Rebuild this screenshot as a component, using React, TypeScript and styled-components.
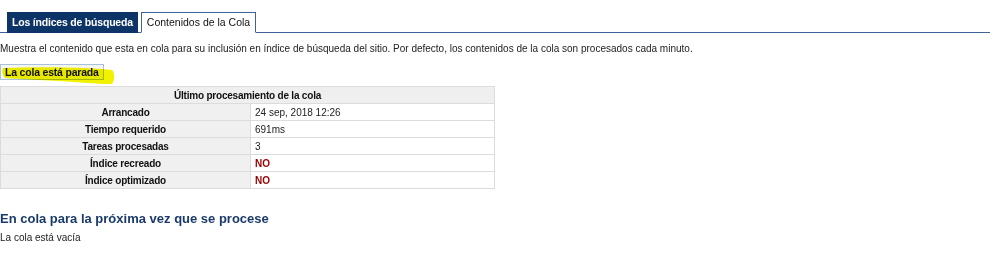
import styled, { createGlobalStyle } from 'styled-components';

const GlobalStyle = createGlobalStyle`
  body {
    margin: 0;
    background: #fff;
    font-family: "Liberation Sans", Arial, sans-serif;
    font-size: 10px;
    color: #222;
  }
`;

type Row = { label: string; value: string; alert?: boolean };

const rows: Row[] = [
  { label: 'Arrancado', value: '24 sep, 2018 12:26' },
  { label: 'Tiempo requerido', value: '691ms' },
  { label: 'Tareas procesadas', value: '3' },
  { label: 'Índice recreado', value: 'NO', alert: true },
  { label: 'Índice optimizado', value: 'NO', alert: true },
];

const App = () => (
  <>
    <GlobalStyle />
    <Page>
      <TabBar>
        <Tab $active={false}>Los índices de búsqueda</Tab>
        <Tab $active>Contenidos de la Cola</Tab>
      </TabBar>

      <Description>
        Muestra el contenido que esta en cola para su inclusión en índice de búsqueda del sitio. Por defecto, los
        contenidos de la cola son procesados cada minuto.
      </Description>

      <StatusWrap>
        <StatusBadge>La cola está parada</StatusBadge>
        <Highlight viewBox="0 0 116 22" preserveAspectRatio="none">
          <path
            d="M3 4 C30 3 60 3 85 4 C98 5 107 5 112 6 C115 9 115 16 112 20 C95 20 80 18 60 17 C40 16 20 15 5 14 C2 11 2 7 3 4 Z"
            fill="#f2f200"
          />
        </Highlight>
      </StatusWrap>

      <Table>
        <thead>
          <tr>
            <HeadCell colSpan={2}>Último procesamiento de la cola</HeadCell>
          </tr>
        </thead>
        <tbody>
          {rows.map((r) => (
            <tr key={r.label}>
              <LabelCell>{r.label}</LabelCell>
              <ValueCell $alert={r.alert}>{r.value}</ValueCell>
            </tr>
          ))}
        </tbody>
      </Table>

      <Heading>En cola para la próxima vez que se procese</Heading>
      <Empty>La cola está vacía</Empty>
    </Page>
  </>
);

export default App;

// ============================
//  Styled Components
// ============================

const Page = styled.div`
  width: 997px;
  padding-top: 12px;
`;

const TabBar = styled.div`
  display: flex;
  gap: 3px;
  padding-left: 7px;
  width: 983px;
  border-bottom: 1px solid #3f6497;
`;

const Tab = styled.div<{ $active: boolean }>`
  height: 19px;
  line-height: 19px;
  padding: 0 ${({ $active }) => ($active ? '5px' : '4px')};
  margin-bottom: -1px;
  font-size: 10.5px;
  font-weight: ${({ $active }) => ($active ? 'normal' : 'bold')};
  letter-spacing: ${({ $active }) => ($active ? '0' : '-0.2px')};
  color: ${({ $active }) => ($active ? '#111' : '#fff')};
  background: ${({ $active }) => ($active ? '#fff' : '#0d3466')};
  border: 1px solid ${({ $active }) => ($active ? '#3f6497' : '#0d3466')};
  border-bottom-color: ${({ $active }) => ($active ? '#fff' : '#0d3466')};
`;

const Description = styled.p`
  margin: 9px 0 0;
  line-height: 13px;
  white-space: nowrap;
`;

const StatusWrap = styled.div`
  position: relative;
  margin-top: 9px;
  height: 17px;
`;

const StatusBadge = styled.div`
  display: inline-block;
  height: 14px;
  line-height: 14px;
  padding: 0 4px;
  font-size: 10.5px;
  font-weight: bold;
  letter-spacing: -0.2px;
  color: #111;
  border: 1px solid #a9c2dc;
  background: #f6f6f0;
`;

const Highlight = styled.svg`
  position: absolute;
  left: 0;
  top: 0;
  width: 116px;
  height: 22px;
  mix-blend-mode: multiply;
  pointer-events: none;
`;

const Table = styled.table`
  margin-top: 5px;
  width: 495px;
  border-collapse: collapse;
  border: 1px solid #dcdcdc;
`;

const HeadCell = styled.th`
  height: 16px;
  padding: 0;
  background: #efefef;
  border: 1px solid #dcdcdc;
  font-weight: bold;
  letter-spacing: -0.2px;
  text-align: center;
  color: #111;
`;

const LabelCell = styled.td`
  width: 249px;
  height: 16px;
  padding: 0;
  background: #f0f0f0;
  border: 1px solid #dcdcdc;
  font-weight: bold;
  letter-spacing: -0.2px;
  text-align: center;
  color: #111;
`;

const ValueCell = styled.td<{ $alert?: boolean }>`
  height: 16px;
  padding: 0 4px;
  border: 1px solid #dcdcdc;
  font-weight: ${({ $alert }) => ($alert ? 'bold' : 'normal')};
  color: ${({ $alert }) => ($alert ? '#990000' : '#222')};
`;

const Heading = styled.h2`
  margin: 21px 0 0;
  font-size: 13px;
  line-height: 17px;
  font-weight: bold;
  color: #1a3a6b;
`;

const Empty = styled.div`
  margin-top: 4px;
  line-height: 13px;
`;
